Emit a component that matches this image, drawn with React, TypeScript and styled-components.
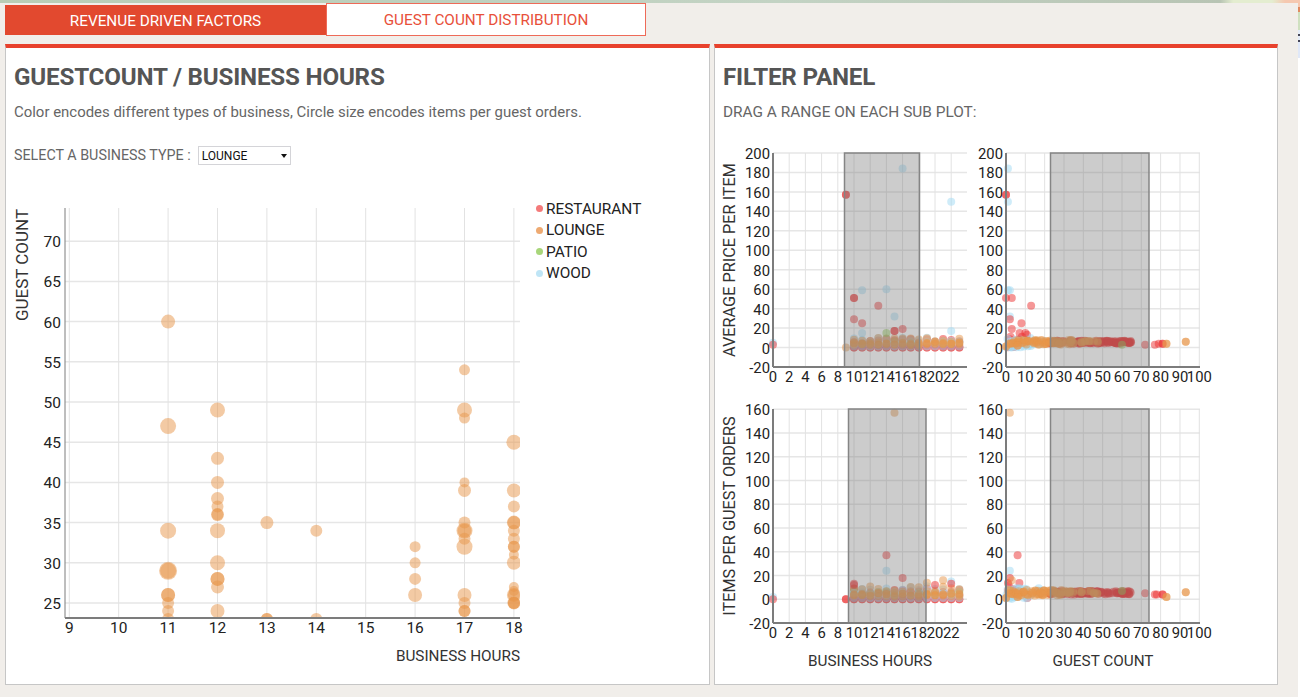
import React from "react";
import styled, { createGlobalStyle } from "styled-components";

type Dot = { x: number; y: number; r?: number; c: string };

const RED = "#ec3030";
const ORANGE = "#e8954a";
const GREEN = "#8cc850";
const BLUE = "#9fdaf3";

const GlobalStyle = createGlobalStyle`
    html, body {
        margin: 0;
        padding: 0;
        background: #fff;
    }
    body {
        min-height: 700px;
        font-family: Roboto, "Liberation Sans", sans-serif;
        background: linear-gradient(180deg, #f5c8b0 0 7px, #e08a60 7px 12px, #cfe0c0 12px 30px, #e4ecf8 30px 34px, #445 34px 36px, #e4ecf8 36px 40px, #445 40px 42px, #e0e8f8 42px 58px, #fff 58px);
    }
`;

const Page = styled.div`
    width: 1298px;
    height: 697px;
    overflow: hidden;
    background: #f1eeea;
`;

const TopStrip = styled.div`
    height: 3px;
    background: linear-gradient(90deg, #b9cdb6 0%, #c3d3c4 60%, #b8c4b4 94%, #e4edd0 95%, #e4edd0 98%, #f5c8b0 99%);
`;

const Tabs = styled.div`
    display: flex;
    align-items: center;
    height: 33px;
    padding-left: 5px;
`;

const Tab = styled.div<{ $active?: boolean }>`
    box-sizing: border-box;
    width: ${(p) => (p.$active ? "321px" : "320px")};
    height: ${(p) => (p.$active ? "30px" : "33px")};
    line-height: ${(p) => (p.$active ? "32px" : "33px")};
    text-align: center;
    font-size: 15.3px;
    color: ${(p) => (p.$active ? "#fff" : "#e8503a")};
    background: ${(p) => (p.$active ? "#e2492f" : "#fff")};
    border: ${(p) => (p.$active ? "none" : "1px solid #ee6a58")};
`;

const Panels = styled.div`
    display: flex;
    gap: 4px;
    margin-top: 8px;
    padding-left: 5px;
`;

const Panel = styled.section<{ $width: number }>`
    box-sizing: border-box;
    width: ${(p) => p.$width}px;
    height: 641px;
    background: #fff;
    border: 1px solid #c6c6c6;
    border-top: 4px solid #e8412c;
`;

const PanelHead = styled.div`
    padding-left: 8px;
`;

const Title = styled.h2`
    margin: 15px 0 0;
    font-size: 24.2px;
    line-height: 28px;
    font-weight: 700;
    letter-spacing: -0.2px;
    color: #555;
`;

const Description = styled.p<{ $caps?: boolean }>`
    margin: 11px 0 0;
    font-size: ${(p) => (p.$caps ? "15.4px" : "14.95px")};
    line-height: 20px;
    color: #666;
`;

const SelectRow = styled.div`
    display: flex;
    align-items: center;
    gap: 7px;
    height: 20px;
    margin-top: 23px;
    font-size: 14.3px;
    color: #666;
`;

const SelectBox = styled.div`
    position: relative;
    box-sizing: border-box;
    width: 93px;
    height: 19px;
    padding-left: 3px;
    line-height: 18px;
    font-size: 12px;
    color: #111;
    background: #fff;
    border: 1px solid #d4d4d8;

    &::after {
        content: "";
        position: absolute;
        right: 3px;
        top: 7px;
        border-left: 3.5px solid transparent;
        border-right: 3.5px solid transparent;
        border-top: 4px solid #111;
    }
`;

const ChartRow = styled.div`
    display: flex;
    margin-top: 30px;
`;

const Legend = styled.ul`
    list-style: none;
    margin: 3px 0 0;
    padding: 0;
`;

const LegendItem = styled.li<{ $color: string }>`
    display: flex;
    align-items: center;
    gap: 3px;
    height: 21.5px;
    font-size: 15.4px;
    color: #222;

    &::before {
        content: "";
        width: 7px;
        height: 7px;
        border-radius: 50%;
        background: ${(p) => p.$color};
    }
`;

const PlotGrid = styled.div`
    display: grid;
    grid-template-columns: 258px 250px;
    grid-template-rows: 255px 280px;
    margin-top: 23px;
`;

const Tick = styled.text`
    font-size: 15.5px;
    fill: #222;
`;

const SmallTick = styled(Tick)`
    font-size: 14.8px;
`;

const AxisTitle = styled.text`
    font-size: 15.3px;
    fill: #333;
`;

const SideTitle = styled(AxisTitle)<{ $size: number }>`
    font-size: ${(p) => p.$size}px;
`;

const GridLine = styled.line`
    stroke: #e6e6e6;
    stroke-width: 1.5;
`;

const GridColumn = styled(GridLine)`
    stroke: #e2e2e2;
    stroke-width: 1;
`;

const Axis = styled.line`
    stroke: #7c7c7c;
    stroke-width: 2;
`;

const Brush = styled.rect`
    fill: rgba(120, 120, 120, 0.38);
    stroke: #858585;
    stroke-width: 1.5;
`;

const Bubble = styled.circle`
    opacity: 0.5;
`;

// small seeded generator so the scatter stays the same on each render
function makeRandom(seed: number) {
    let s = seed;
    return () => {
        s = (s * 16807) % 2147483647;
        return (s - 1) / 2147483646;
    };
}

const lounge: [number, number, number][] = [
    [11, 60, 7], [11, 47, 8], [11, 34, 8], [11, 29, 8], [11, 29, 9], [11, 26, 7], [11, 26, 7], [11, 25, 6], [11, 24, 6], [11, 23, 6],
    [12, 49, 7.5], [12, 43, 6.5], [12, 40, 6.5], [12, 38, 6.5], [12, 37, 6], [12, 36, 6], [12, 36, 6.5], [12, 34, 7.5], [12, 30, 7.5], [12, 28, 7], [12, 28, 7], [12, 27, 6.5], [12, 24, 7],
    [13, 35, 6.5], [13, 23, 6], [13, 23, 6],
    [14, 34, 6], [14, 23, 6],
    [16, 32, 5.5], [16, 30, 5.5], [16, 28, 6], [16, 26, 7],
    [17, 54, 5.5], [17, 49, 7.5], [17, 48, 5.5], [17, 40, 5], [17, 39, 6.5], [17, 35, 6], [17, 34, 8], [17, 34, 7], [17, 33, 6], [17, 32, 8], [17, 26, 7], [17, 25, 6], [17, 24, 6], [17, 24, 6],
    [18, 45, 7.5], [18, 39, 7], [18, 37, 6], [18, 35, 7], [18, 35, 6.5], [18, 34, 6], [18, 33, 6], [18, 32, 6], [18, 32, 6], [18, 31, 5], [18, 30, 7], [18, 27, 5], [18, 26.5, 5], [18, 26, 7], [18, 26, 6], [18, 25, 6], [18, 25, 6.5], [18, 25, 6],
];

function hourColumns(seed: number, top: number): Dot[] {
    const rnd = makeRandom(seed);
    const dots: Dot[] = [];
    for (let h = 10; h <= 23; h++) {
        [0, 0, 1 + rnd() * 3, 3 + rnd() * (top - 3)].forEach((y) => dots.push({ x: h, y, c: RED }));
        if (rnd() > 0.6) dots.push({ x: h, y: 3 + rnd() * 4, c: GREEN });
        [1, 3 + rnd() * 3, 5 + rnd() * (top - 4)].forEach((y) => dots.push({ x: h, y, c: BLUE }));
        [2 + rnd() * 2, 3 + rnd() * 2, 4 + rnd() * 2, 6 + rnd() * (top - 5)].forEach((y) => dots.push({ x: h, y, c: ORANGE }));
    }
    return dots;
}

function guestBand(seed: number, base: number): Dot[] {
    const rnd = makeRandom(seed);
    const dots: Dot[] = [];
    for (let i = 0; i < 12; i++) dots.push({ x: 1 + rnd() * 12, y: rnd() * 14, c: RED });
    for (let i = 0; i < 30; i++) dots.push({ x: rnd() * 20, y: rnd() * 10, c: BLUE });
    dots.push({ x: 3, y: 2, r: 6, c: BLUE }, { x: 4, y: 3, r: 5.5, c: BLUE }, { x: 2, y: 5, r: 5, c: BLUE });
    for (let i = 0; i < 110; i++) dots.push({ x: 22 + rnd() * 43, y: base - 1 + rnd() * 3, c: RED });
    for (let i = 0; i < 70; i++) dots.push({ x: 1 + rnd() * 34, y: base - 2 + rnd() * 5, c: ORANGE });
    for (let i = 0; i < 18; i++) dots.push({ x: 24 + rnd() * 24, y: base - 1 + rnd() * 3, c: ORANGE });
    dots.push({ x: 0, y: 1, r: 4, c: ORANGE }, { x: 0, y: 1, r: 4, c: ORANGE }, { x: 6, y: 2, c: ORANGE }, { x: 6, y: 2, c: ORANGE });
    return dots;
}

const priceByHour: Dot[] = [
    ...hourColumns(11, 9),
    { x: 9, y: 157, c: RED }, { x: 9, y: 157, c: RED }, { x: 16, y: 184, c: BLUE }, { x: 22, y: 150, c: BLUE },
    { x: 11, y: 59, c: BLUE }, { x: 14, y: 60, c: BLUE }, { x: 10, y: 51, c: RED }, { x: 10, y: 51, c: RED },
    { x: 13, y: 43, c: RED }, { x: 15, y: 32, c: BLUE }, { x: 10, y: 29, c: RED }, { x: 11, y: 25, c: RED },
    { x: 11, y: 15, c: BLUE }, { x: 14, y: 15, c: GREEN }, { x: 16, y: 19, c: RED }, { x: 15, y: 17, c: RED }, { x: 15, y: 17, c: RED },
    { x: 22, y: 17, c: BLUE }, { x: 0, y: 5, c: BLUE }, { x: 0, y: 3, c: RED }, { x: 9, y: 0, c: ORANGE },
];

const priceByGuests: Dot[] = [
    ...guestBand(23, 5),
    { x: 0, y: 157, c: RED }, { x: 0, y: 157, c: RED }, { x: 1, y: 184, c: BLUE }, { x: 1, y: 150, c: BLUE },
    { x: 1, y: 59, c: BLUE }, { x: 2, y: 59, c: BLUE }, { x: 0, y: 51, c: RED }, { x: 3, y: 51, c: RED },
    { x: 13, y: 43, c: RED }, { x: 2, y: 32, c: BLUE }, { x: 2, y: 29, c: RED }, { x: 8, y: 25, c: RED },
    { x: 3, y: 19, c: RED }, { x: 10, y: 15, c: RED }, { x: 7, y: 15, c: RED },
    { x: 72, y: 3, c: RED }, { x: 77, y: 3, c: RED }, { x: 79, y: 4, c: RED }, { x: 81, y: 4, c: RED }, { x: 81, y: 4, c: RED },
    { x: 83, y: 4, c: ORANGE }, { x: 83, y: 4, c: ORANGE }, { x: 93, y: 6, c: ORANGE }, { x: 93, y: 6, c: ORANGE },
    { x: 60, y: 3, c: GREEN },
];

const itemsByHour: Dot[] = [
    ...hourColumns(37, 10),
    { x: 15, y: 157, c: ORANGE }, { x: 14, y: 37, c: RED }, { x: 14, y: 24, c: BLUE }, { x: 16, y: 18, c: RED },
    { x: 10, y: 13, c: RED }, { x: 10, y: 12, c: RED }, { x: 9, y: 0, c: RED }, { x: 9, y: 0, c: RED }, { x: 0, y: 2, c: BLUE }, { x: 0, y: 0, c: RED },
    { x: 21, y: 16, c: ORANGE }, { x: 22, y: 15, c: BLUE }, { x: 22, y: 13, c: RED }, { x: 19, y: 14, c: ORANGE }, { x: 20, y: 12, c: RED },
];

const itemsByGuests: Dot[] = [
    ...guestBand(53, 5),
    { x: 2, y: 157, c: ORANGE }, { x: 6, y: 37, c: RED }, { x: 2, y: 24, c: BLUE }, { x: 2, y: 18, c: RED }, { x: 3, y: 16, c: ORANGE },
    { x: 72, y: 5, c: RED }, { x: 77, y: 4, c: RED }, { x: 78, y: 4, c: RED }, { x: 81, y: 4, c: RED }, { x: 81, y: 4, c: RED },
    { x: 83, y: 2, c: ORANGE }, { x: 83, y: 2, c: ORANGE }, { x: 93, y: 6, c: ORANGE }, { x: 93, y: 6, c: ORANGE },
    { x: 60, y: 7, c: GREEN },
];

function MainChart() {
    const sx = (v: number) => 63.3 + (v - 9) * 49.4;
    const sy = (v: number) => 408 - (v - 25) * 8.04;
    const hours = [9, 10, 11, 12, 13, 14, 15, 16, 17, 18];
    const counts = [25, 30, 35, 40, 45, 50, 55, 60, 65, 70];
    return (
        <svg width="530" height="480">
            <clipPath id="main-clip">
                <rect x="59" y="13" width="455" height="410" />
            </clipPath>
            {counts.map((c) => (
                <g key={c}>
                    <GridLine x1="59" x2="514" y1={sy(c)} y2={sy(c)} />
                    <Tick x="55" y={sy(c) + 6} textAnchor="end">{c}</Tick>
                </g>
            ))}
            {hours.map((h) => (
                <g key={h}>
                    <GridColumn x1={sx(h)} x2={sx(h)} y1="13" y2="423" />
                    <Tick x={sx(h)} y="438" textAnchor="middle">{h}</Tick>
                </g>
            ))}
            <g clipPath="url(#main-clip)">
                {lounge.map(([x, y, r], i) => (
                    <Bubble key={i} cx={sx(x)} cy={sy(y)} r={r} fill={ORANGE} />
                ))}
            </g>
            <Axis x1="59" x2="59" y1="13" y2="423" style={{ strokeWidth: 1 }} />
            <Axis x1="59" x2="514" y1="423" y2="423" />
            <AxisTitle x="514" y="466" textAnchor="end">BUSINESS HOURS</AxisTitle>
            <SideTitle $size={17} transform="translate(22 70) rotate(-90)" textAnchor="middle">GUEST COUNT</SideTitle>
        </svg>
    );
}

type PlotProps = {
    left: number;
    top: number;
    xTicks: number[];
    xScale: number;
    yTicks: number[];
    yScale: number;
    brush: [number, number];
    dots: Dot[];
    yLabel?: string;
    xLabel?: string;
};

function SmallPlot(props: PlotProps) {
    const { left, top, xTicks, xScale, yTicks, yScale, brush, dots, yLabel, xLabel } = props;
    const right = left + 194;
    const bottom = top + 214;
    const zeroY = bottom - 20 * yScale;
    const sx = (v: number) => left + v * xScale;
    const sy = (v: number) => zeroY - v * yScale;
    return (
        <svg width="258" height="280" style={{ overflow: "visible" }}>
            {yTicks.map((t) => (
                <g key={t}>
                    <GridLine x1={left} x2={right} y1={sy(t)} y2={sy(t)} />
                    <SmallTick x={left - 3} y={sy(t) + 6} textAnchor="end">{t}</SmallTick>
                </g>
            ))}
            {xTicks.map((t) => (
                <g key={t}>
                    <GridColumn x1={sx(t)} x2={sx(t)} y1={top} y2={bottom} />
                    <SmallTick x={sx(t)} y={bottom + 15} textAnchor="middle">{t}</SmallTick>
                </g>
            ))}
            {dots.map((d, i) => (
                <Bubble key={i} cx={sx(d.x)} cy={sy(d.y)} r={d.r ?? 4} fill={d.c} />
            ))}
            <Brush x={brush[0]} y={top} width={brush[1] - brush[0]} height={bottom - top} />
            <Axis x1={left} x2={left} y1={top} y2={bottom} />
            <Axis x1={left} x2={right} y1={bottom} y2={bottom} />
            {yLabel && (
                <SideTitle $size={16.3} transform={`translate(20 ${top + 107}) rotate(-90)`} textAnchor="middle">{yLabel}</SideTitle>
            )}
            {xLabel && (
                <AxisTitle x={left + 97} y={bottom + 43} textAnchor="middle">{xLabel}</AxisTitle>
            )}
        </svg>
    );
}

const hourTicks = [0, 2, 4, 6, 8, 10, 12, 14, 16, 18, 20, 22];
const guestTicks = [0, 10, 20, 30, 40, 50, 60, 70, 80, 90, 100];
const priceTicks = [-20, 0, 20, 40, 60, 80, 100, 120, 140, 160, 180, 200];
const itemTicks = [-20, 0, 20, 40, 60, 80, 100, 120, 140, 160];

export default function App() {
    return (
        <Page>
            <GlobalStyle />
            <TopStrip />
            <Tabs>
                <Tab $active>REVENUE DRIVEN FACTORS</Tab>
                <Tab>GUEST COUNT DISTRIBUTION</Tab>
            </Tabs>
            <Panels>
                <Panel $width={705}>
                    <PanelHead>
                        <Title>GUESTCOUNT / BUSINESS HOURS</Title>
                        <Description>Color encodes different types of business, Circle size encodes items per guest orders.</Description>
                        <SelectRow>
                            SELECT A BUSINESS TYPE :
                            <SelectBox>LOUNGE</SelectBox>
                        </SelectRow>
                    </PanelHead>
                    <ChartRow>
                        <MainChart />
                        <Legend>
                            <LegendItem $color="#f47a7a">RESTAURANT</LegendItem>
                            <LegendItem $color="#eeaa72">LOUNGE</LegendItem>
                            <LegendItem $color="#a8d67a">PATIO</LegendItem>
                            <LegendItem $color="#bfe5f6">WOOD</LegendItem>
                        </Legend>
                    </ChartRow>
                </Panel>
                <Panel $width={564}>
                    <PanelHead>
                        <Title>FILTER PANEL</Title>
                        <Description $caps>DRAG A RANGE ON EACH SUB PLOT:</Description>
                    </PanelHead>
                    <PlotGrid>
                        <SmallPlot left={58} top={8} xTicks={hourTicks} xScale={8.1} yTicks={priceTicks} yScale={0.9727} brush={[129.5, 204.5]} dots={priceByHour} yLabel="AVERAGE PRICE PER ITEM" />
                        <SmallPlot left={33} top={8} xTicks={guestTicks} xScale={1.933} yTicks={priceTicks} yScale={0.9727} brush={[77.5, 176]} dots={priceByGuests} />
                        <SmallPlot left={58} top={9} xTicks={hourTicks} xScale={8.1} yTicks={itemTicks} yScale={1.1875} brush={[133.5, 211]} dots={itemsByHour} yLabel="ITEMS PER GUEST ORDERS" xLabel="BUSINESS HOURS" />
                        <SmallPlot left={33} top={9} xTicks={guestTicks} xScale={1.933} yTicks={itemTicks} yScale={1.1875} brush={[77.5, 176]} dots={itemsByGuests} xLabel="GUEST COUNT" />
                    </PlotGrid>
                </Panel>
            </Panels>
        </Page>
    );
}
